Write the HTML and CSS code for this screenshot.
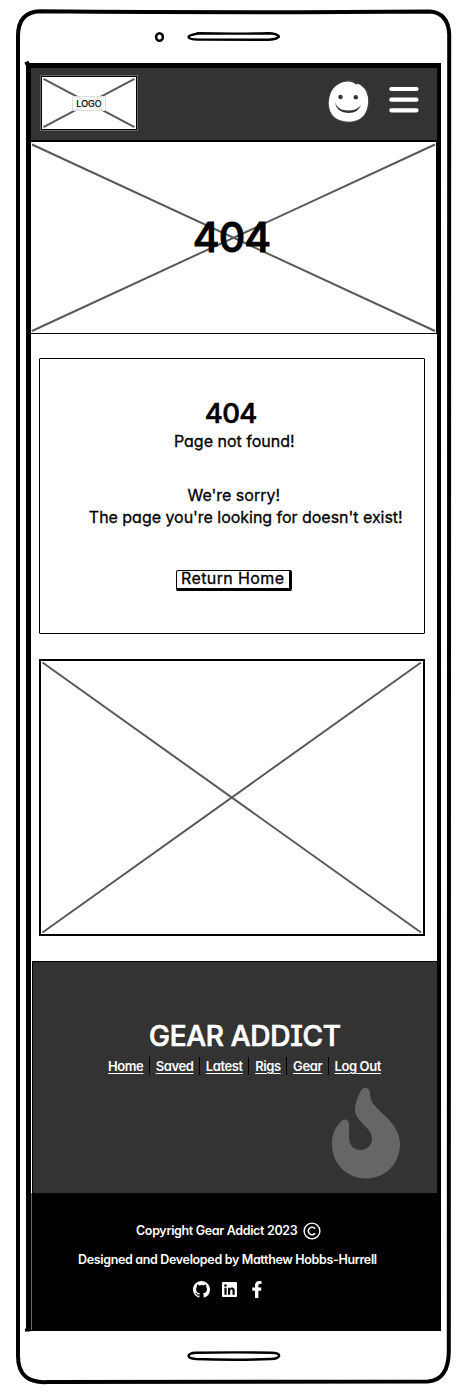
FILE: index.html
```html
<!DOCTYPE html>
<html lang="en">
<head>
<meta charset="utf-8">
<title>Gear Addict - 404</title>
<link rel="stylesheet" href="styles.css">
</head>
<body>
<div class="phone">
  <svg class="frame" viewBox="0 0 468 1394" fill="none" stroke="#000">
    <path d="M40 11.3Q250 13 430 11.5Q448 13 449.2 34L448.8 1350Q449 1380 428 1381.5L48 1382Q18 1384 18 1356L18 36Q18 12 40 11.3Z" stroke-width="4"/>
    <path d="M25 64l4-2M25 1330h5" stroke-width="3"/>
  </svg>
  <div class="bezel bezel-top">
    <svg width="126" height="14" viewBox="0 0 126 14" fill="none" stroke="#000" stroke-width="2.4">
      <ellipse cx="5.5" cy="7" rx="3.4" ry="3.8"/>
      <path d="M44 3.5Q35 5 34.5 7Q35 9.5 44 9.6L115 9.7Q124 9 125 6.5Q123 3.5 114 3.2Q80 4 44 3.2Z"/>
    </svg>
  </div>
  <div class="screen">
    <header class="top">
      <div class="logo">
        <svg class="cross" viewBox="0 0 94 53" preserveAspectRatio="none"><path d="M1.500 2L92.500 51M92.500 2L1.500 51"/></svg>
        <span>LOGO</span>
      </div>
      <div class="tools">
        <svg width="44" height="46" viewBox="0 0 44 46">
          <path d="M20 1.500Q24 -.5 30 3Q43 8 42.500 23Q42 42 22 44.500Q.5 43 1 24Q2 4 20 1.500Z" fill="#404040"/>
          <path d="M20 2.600Q25 2 29 5.500Q31.500 4 34 6.500Q41.500 12 41.200 23Q40 42 22 42.700Q2 42 1.700 24Q2.500 5 20 2.600Z" fill="#fff"/>
          <circle cx="13.500" cy="18" r="2.200" fill="#333"/><circle cx="28.800" cy="18.300" r="2.200" fill="#333"/>
          <path d="M8 23.500Q11 31.500 21 31.500Q31 31.500 34 25.500Q32 34 21 34Q9.500 33.500 8 23.500Z" fill="#333"/>
        </svg>
        <svg width="30" height="28" viewBox="0 0 30 28" stroke="#fff" stroke-width="4.2" stroke-linecap="round"><path d="M2.300 3H27.500M2.300 13.700H27.500M2.300 24.300H27.500"/></svg>
      </div>
    </header>
    <section class="hero">
      <svg class="cross" viewBox="0 0 406 192" preserveAspectRatio="none"><path d="M1 2.500L405 190M405 2.500L1 190"/></svg>
      <h1>404</h1>
    </section>
    <main>
      <section class="card">
        <h2>404</h2>
        <p class="found">Page not found!</p>
        <p class="sorry">We're sorry!</p>
        <p class="missing">The page you're looking for doesn't exist!</p>
        <button>Return Home</button>
      </section>
      <section class="picture">
        <svg class="cross" viewBox="0 0 381 273" preserveAspectRatio="none"><path d="M1.500 1.500L379.500 271.500M379.500 1.500L1.500 271.500"/></svg>
      </section>
    </main>
    <footer>
      <div class="brand">
        <h3>GEAR ADDICT</h3>
        <nav><a>Home</a><i></i><a>Saved</a><i></i><a>Latest</a><i></i><a>Rigs</a><i></i><a>Gear</a><i></i><a>Log Out</a></nav>
        <svg class="flame" width="70" height="92" viewBox="0 0 70 92" fill="#666"><path d="M31 2C35-1 39 2 39 6C39 15 44 19 50 25C62 36 69 45 69 57C69 77 54 91.500 35 91.500C16 91.500 1 77 1 57C1 46 5 39 11 33.500C14 31 18 33 18 37V51C18 58 23 63 29.500 63C36 63 41 58 41 52C41 46 37 42 34 39C27 32 24 28 24 23C24 15 28 7 31 2Z"/></svg>
      </div>
      <div class="legal">
        <p class="copy"><span>Copyright Gear Addict 2023</span>
          <svg width="18" height="18" viewBox="0 0 18 18" fill="none" stroke="#fff" stroke-width="1.400"><circle cx="9" cy="9" r="7.900"/><path d="M12 6.800A3.700 3.700 0 1 0 12 11.200" stroke-width="1.600"/></svg>
        </p>
        <p class="author">Designed and Developed by Matthew Hobbs-Hurrell</p>
        <div class="social">
          <svg width="17" height="17" viewBox="0 0 16 16" fill="#fff"><path d="M8 0C3.580 0 0 3.580 0 8c0 3.540 2.290 6.530 5.470 7.590.4.070.55-.17.55-.38v-1.490c-2.010.37-2.530-.49-2.690-.94-.09-.23-.48-.94-.82-1.130-.28-.15-.68-.52-.01-.53.63-.01 1.080.58 1.230.82.72 1.210 1.870.87 2.330.66.070-.52.280-.87.510-1.070-1.780-.2-3.640-.89-3.640-3.950 0-.87.310-1.590.82-2.150-.08-.2-.36-1.020.08-2.120 0 0 .67-.21 2.200.82a7.600 7.600 0 0 1 4 0c1.530-1.040 2.200-.82 2.200-.82.44 1.100.16 1.920.08 2.120.51.56.82 1.270.82 2.150 0 3.070-1.870 3.750-3.650 3.950.29.25.54.73.54 1.480v2.200c0 .21.15.46.55.38A8.010 8.010 0 0 0 16 8c0-4.420-3.580-8-8-8z"/></svg>
          <svg width="15" height="15" viewBox="0 0 15 15"><rect width="15" height="15" rx="1" fill="#fff"/><g fill="#000"><circle cx="3.500" cy="3.500" r="1.300"/><path d="M2.400 5.700h2.200v7H2.400zM6 5.700h2.100v1C9.200 5 12.700 5 12.700 8.600v4.100h-2.200V9c0-2-2.300-1.900-2.300 0v3.700H6z"/></g></svg>
          <svg class="fb" width="10" height="17" viewBox="0 0 10 17" fill="#fff"><path d="M3 17V9.700H.3V6.600H3V4.300C3 1.500 4.700 0 7.200 0L9.500.2V3H7.900C6.700 3 6.400 3.600 6.400 4.500V6.600H9.400L9 9.700H6.400V17z"/></svg>
        </div>
      </div>
    </footer>
  </div>
  <div class="bezel bezel-bottom">
    <svg width="94" height="12" viewBox="0 0 94 12" fill="none" stroke="#000" stroke-width="2.400"><path d="M9 2.800Q45 2 84 2.700Q93 3 92 6Q91 8.800 84 9Q46 10.500 9 9Q2 8.500 1.500 6Q2 3 9 2.800Z"/></svg>
  </div>
</div>
</body>
</html>
```
FILE: styles.css
```css
* { box-sizing: border-box; margin: 0; padding: 0; }
body {
  background: #fff;
  color: #000;
  font-family: Inter, "Noto Sans", sans-serif;
  font-feature-settings: "cv11";
}
svg { display: block; flex: none; }
.phone { position: relative; display: flex; flex-direction: column; width: 468px; height: 1394px; padding: 0 27px 0 26px; }
.frame { position: absolute; inset: 0; width: 468px; height: 1394px; pointer-events: none; }
.bezel { display: flex; height: 63px; flex: none; }
.bezel-top { padding: 30px 0 0 128px; }
.bezel-bottom { padding: 19px 0 0 161px; }
.screen { display: flex; flex-direction: column; flex: none; height: 1268px; border: 5px solid #000; border-bottom-width: 1px; border-right-width: 4px; }
.cross { position: absolute; inset: 0; width: 100%; height: 100%; fill: none; stroke: #595959; stroke-width: 2; }
.top { display: flex; justify-content: space-between; flex: none; height: 73px; padding: 8px 18px 0 10px; background: #333; border-bottom: 1px solid #000; }
.logo { position: relative; display: flex; align-items: center; justify-content: center; width: 96px; height: 54px; background: #fff; border: 1px solid #000; outline: 1px solid #666; }
.logo span { position: relative; padding: 1px 3px; background: rgba(255,255,255,.85); border: 1px solid #ddd; border-radius: 2px; font-size: 9px; line-height: 11px; -webkit-text-stroke: .2px #000; }
.tools { display: flex; gap: 18px; padding-top: 3px; }
.tools svg:last-child { margin-top: 7px; }
.hero { position: relative; display: flex; justify-content: center; flex: none; height: 193px; margin-left: -1px; padding-top: 70px; padding-right: 4px; border: 1.500px solid #000; }
h1 { position: relative; font-size: 41px; line-height: 50px; font-weight: 500; letter-spacing: -1px; -webkit-text-stroke: 1px #000; }
main { display: flex; flex-direction: column; gap: 25px; flex: none; height: 627px; padding: 24px 12.500px 0 8px; }
.card { display: flex; flex-direction: column; align-items: center; height: 276px; padding-top: 37px; border: 1.800px solid #000; border-radius: 1px; font-size: 16px; line-height: 22px; -webkit-text-stroke: .3px #000; }
h2 { font-size: 27.500px; line-height: 34px; font-weight: 500; letter-spacing: -.6px; padding-right: 2px; -webkit-text-stroke: .6px #000; }
.found { padding-left: 5px; }
.sorry { margin-top: 32px; padding-left: 4px; }
.missing { padding-left: 28px; letter-spacing: -.03px; white-space: nowrap; }
button { margin: 42px 0 0 4px; width: 116px; height: 21px; padding-bottom: 2px; border: 1.500px solid #000; border-right-width: 3px; border-bottom-width: 3px; border-radius: 2px; background: #fff; color: #000; font: inherit; letter-spacing: .4px; line-height: 15px; white-space: nowrap; }
.picture { position: relative; height: 277px; border: 2px solid #000; }
footer { display: flex; flex-direction: column; flex: 1; color: #fff; }
.brand { display: flex; flex-direction: column; height: 232px; margin-left: 1px; padding-top: 57px; background: #333; border: 1px solid #000; border-width: 1px 0 0 1px; }
h3 { align-self: flex-start; margin-left: 116px; font-size: 28px; line-height: 34px; font-weight: 500; letter-spacing: -.300px; -webkit-text-stroke: .7px #fff; font-feature-settings: "cv08"; white-space: nowrap; }
nav { display: flex; align-items: center; justify-content: space-between; width: 273px; height: 20px; margin: 3px 0 0 75px; font-size: 13px; font-weight: 600; letter-spacing: -.4px; white-space: nowrap; }
nav a { text-decoration: underline; text-underline-offset: 2px; }
nav i { width: 1px; height: 18px; background: #000; }
.flame { margin: 11px 0 0 298px; }
.legal { display: flex; flex-direction: column; align-items: flex-start; flex: 1; padding-top: 29px; background: #000; border-left: 1px solid #666; font-size: 12.500px; font-weight: 600; letter-spacing: -.34px; line-height: 18px; white-space: nowrap; }
.copy { display: flex; gap: 6px; margin-left: 104px; }
.author { margin: 11px 0 0 46px; }
.social { display: flex; align-items: center; gap: 12px; margin: 12px 0 0 161px; }
.fb { margin-left: 3px; }
```
